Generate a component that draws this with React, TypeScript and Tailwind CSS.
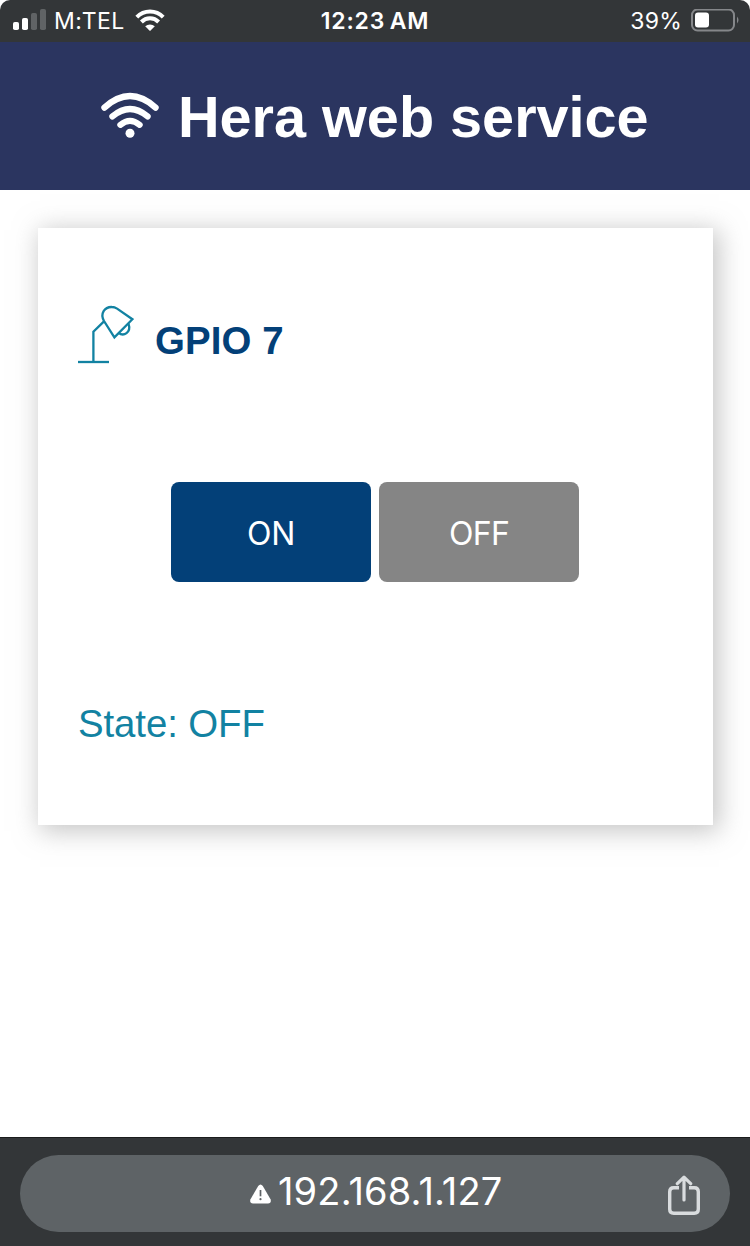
function SignalBars() {
  return (
    <svg className="ml-3 h-6 w-[34px] shrink-0" viewBox="0 0 34 24" fill="#fff">
      <rect x="1" y="13" width="6" height="8" rx="1.8" />
      <rect x="10" y="9" width="6" height="12" rx="1.8" />
      <rect x="19" y="4" width="6" height="17" rx="1.8" fill="#606365" />
      <rect x="28" y="0" width="6" height="21" rx="1.8" fill="#606365" />
    </svg>
  );
}

function StatusWifi() {
  return (
    <svg className="ml-[10px] h-6 w-[30px] shrink-0" viewBox="0 0 30 24">
      <g fill="none" stroke="#fff" strokeWidth="4">
        <path d="M1.8 8.1 A18.6 18.6 0 0 1 28.2 8.1" />
        <path d="M6.4 13 A12 12 0 0 1 23.6 13" />
      </g>
      <path d="M10.2 17.3 A7 7 0 0 1 19.8 17.3 L15.6 21.5 Q15 22 14.4 21.5Z" fill="#fff" />
    </svg>
  );
}

function Battery() {
  return (
    <svg className="ml-[9px] h-6 w-12 shrink-0" viewBox="0 0 48 24">
      <rect x="1" y="0.5" width="42" height="21" rx="5.5" fill="none" stroke="#85878a" strokeWidth="2" />
      <rect x="4" y="3.5" width="14" height="15" rx="3" fill="#fff" />
      <path d="M46 7.5 Q49 11 46 14.5Z" fill="#85878a" />
    </svg>
  );
}

function StatusBar() {
  return (
    <div className="bg-white">
      <div className="grid h-[42px] grid-cols-3 items-center rounded-t-[10px] bg-[#333638] text-[23px] leading-[42px] text-white">
        <div className="flex items-center">
          <SignalBars />
          <span className="ml-2 whitespace-nowrap tracking-[0.5px]">M:TEL</span>
          <StatusWifi />
        </div>
        <div className="text-center font-semibold tracking-[0.8px] whitespace-nowrap">12:23&#8201;AM</div>
        <div className="flex items-center justify-end pr-[11px]">
          <span className="tracking-[0.2px]">39%</span>
          <Battery />
        </div>
      </div>
    </div>
  );
}

function HeaderWifi() {
  return (
    <svg className="-mt-0.5 h-[47px] w-[60px] shrink-0" viewBox="0 0 60 47">
      <g fill="none" stroke="#fff" strokeWidth="6.2" strokeLinecap="round">
        <path d="M4.4 15.6 Q30 -7.4 55.6 15.6" />
        <path d="M12.4 24.4 Q30 9.6 47.6 24.4" />
        <path d="M20.4 32.8 Q30 25 39.6 32.8" />
      </g>
      <circle cx="30" cy="41.3" r="4.5" fill="#fff" />
    </svg>
  );
}

function Lamp() {
  return (
    <svg className="mt-px h-[60px] w-[60px] shrink-0" viewBox="0 0 60 60" fill="none" stroke="#1282a2" strokeWidth="2.3">
      <path d="M0 57 H31" />
      <path d="M15.4 57 V26.7 L26 16.4" />
      <path d="M36.4 32.3 L26 16 C21.8 8.5 26.6 1.8 33.8 2 C35.6 2 37.4 2.5 39.1 3.6 L54.4 14.2 Z" />
      <path d="M40.4 27.6 C45.6 32 53.5 27.5 50.5 18.6" />
    </svg>
  );
}

function AddressBar() {
  return (
    <div className="h-[109px] border-t border-[#1a1c1d] bg-[#333638] px-5 pt-[17px]">
      <div className="flex h-[77px] items-center rounded-full bg-[#5e6366] text-white">
        <svg className="ml-[230px] mt-px h-5 w-[21px]" viewBox="0 0 21 20">
          <path d="M8.2 2.1 Q10.5 -1.3 12.8 2.1 L20.5 15.3 Q21.8 19.3 18 19.5 H3 Q-.8 19.3 .5 15.3Z" fill="#fff" />
          <path d="M10.5 6 V12.3" stroke="#5e6366" strokeWidth="1.7" />
          <circle cx="10.5" cy="15.2" r="1.1" fill="#5e6366" />
        </svg>
        <span className="-mt-[5px] ml-[7px] w-[234px] whitespace-nowrap text-[38px] leading-[72px] tracking-[0.15px]">192.168.1.127</span>
        <svg className="ml-auto mr-[30px] mt-[3px] h-10 w-8" viewBox="0 0 32 40" fill="none" stroke="#d9dcde" strokeWidth="3.4">
          <path d="M11 12.7 H5.7 Q1.7 12.7 1.7 16.7 V34.3 Q1.7 38.3 5.7 38.3 H26.3 Q30.3 38.3 30.3 34.3 V16.7 Q30.3 12.7 26.3 12.7 H21" />
          <path d="M16 25 V3 M9.3 8.7 L16 2.2 L22.7 8.7" strokeWidth="3.2" strokeLinecap="round" strokeLinejoin="round" />
        </svg>
      </div>
    </div>
  );
}

export default function App() {
  return (
    <div className="flex h-[1246px] w-[750px] flex-col overflow-hidden bg-white font-['Inter',sans-serif]">
      <StatusBar />
      <header className="flex h-[148px] items-center bg-[#2b3560] pl-[100px] font-['Liberation_Sans',sans-serif] text-white">
        <HeaderWifi />
        <h1 className="mt-0.5 ml-[18px] whitespace-nowrap text-[57.6px] leading-[66px] font-bold">Hera web service</h1>
      </header>
      <main className="flex-1 px-[38px] pt-[38px]">
        <section className="mr-[-1px] h-[597px] bg-white px-10 pt-[76px] font-['Liberation_Sans',sans-serif] shadow-[4px_4px_24px_2px_rgba(140,140,140,0.5)]">
          <div className="flex h-[62px] items-start">
            <Lamp />
            <h2 className="ml-[17px] mt-[14px] text-[38.4px] leading-[46px] font-bold tracking-[0.1px] text-[#034078]">GPIO 7</h2>
          </div>
          <div className="mt-[116px] flex gap-2 pl-[93px] font-['Inter',sans-serif] text-[32px] text-white">
            <button className="h-[100px] w-[200px] rounded-[8px] bg-[#034078] pt-[3px] tracking-[-0.2px]">ON</button>
            <button className="h-[100px] w-[200px] rounded-[8px] bg-[#858585] pt-[3px] tracking-[-0.7px]">OFF</button>
          </div>
          <p className="mt-[119px] text-[38.4px] leading-[46px] tracking-[-0.1px] text-[#1282a2]">State: OFF</p>
        </section>
      </main>
      <AddressBar />
    </div>
  );
}
